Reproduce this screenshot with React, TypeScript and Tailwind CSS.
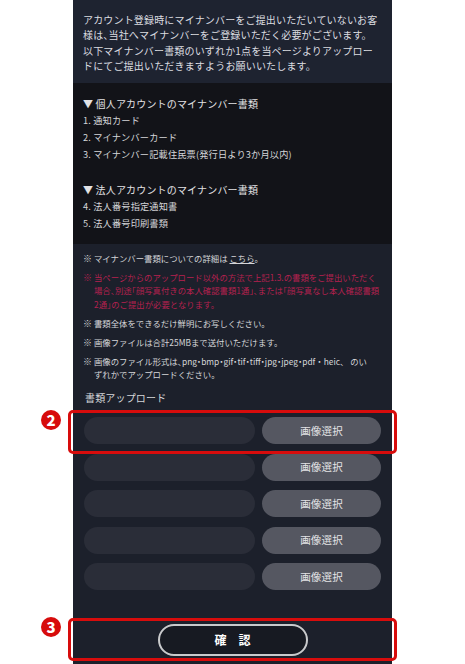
const font = { fontFamily: '"Noto Sans CJK JP", "Liberation Sans", sans-serif' };

function Half({ children }: { children: React.ReactNode }) {
  return <span className="[font-feature-settings:'halt']">{children}</span>;
}

function Note({ children, red }: { children: React.ReactNode; red?: boolean }) {
  return (
    <div className={"flex leading-[13.3px] " + (red ? "text-[#b5204f]" : "text-[#d5d6d9]")}>
      <span className="w-[11px] shrink-0 text-[9px]">※</span>
      <div className="whitespace-nowrap">{children}</div>
    </div>
  );
}

function UploadRow() {
  return (
    <div className="flex gap-[7px] h-[27px]">
      <div className="w-[171px] rounded-full bg-[#2a2d38]" />
      <div className="w-[119px] rounded-full bg-[#555761] flex items-center justify-center text-[10.5px] text-[#e4e4e6]">画像選択</div>
    </div>
  );
}

function Marker({ n, top, height }: { n: string; top: string; height: string }) {
  return (
    <>
      <div className={"absolute left-[41px] w-[20px] h-[20px] rounded-full bg-[#d70c0c] flex items-center justify-center text-white text-[15px] font-black " + (n === "2" ? "top-[410px]" : "top-[617px]")}>{n}</div>
      <div className={"absolute left-[68px] w-[329px] border-[3px] border-[#d70c0c] rounded-[5px] " + top + " " + height} />
    </>
  );
}

export default function App() {
  return (
    <div className="relative w-[465px] h-[664px] bg-white overflow-hidden" style={font}>
      <div className="ml-[73px] w-[319px] h-[664px] bg-[#1c202b] text-[10px] tracking-[0.17px]">
        <div className="h-[83px] pt-[12px] px-[10px] bg-[#1e2330] text-[#dcdde0] leading-[15.4px] whitespace-nowrap">
          <p>アカウント登録時にマイナンバーをご提出いただいていないお客</p>
          <p>様は<Half>、</Half>当社へマイナンバーをご登録いただく必要がございます。</p>
          <p>以下マイナンバー書類のいずれか1点を当ページよりアップロー</p>
          <p>ドにてご提出いただきますようお願いいたします。</p>
        </div>
        <div className="h-[161px] pt-[12px] px-[10px] bg-[#121318] text-[#d5d6d9] text-[9.2px] leading-[17px]">
          <p className="text-[10px] text-[#e2e2e4]">▼ 個人アカウントのマイナンバー書類</p>
          <p>1. 通知カード</p>
          <p>2. マイナンバーカード</p>
          <p>3. マイナンバー記載住民票(発行日より3か月以内)</p>
          <p className="text-[10px] text-[#e2e2e4] mt-[18px]">▼ 法人アカウントのマイナンバー書類</p>
          <p>4. 法人番号指定通知書</p>
          <p>5. 法人番号印刷書類</p>
        </div>
        <div className="pt-[8px] px-[10px] flex flex-col gap-[5.7px] text-[8.4px] tracking-[0px]">
          <Note><p>マイナンバー書類についての詳細は <span className="underline">こちら</span>。</p></Note>
          <Note red>
            <p>当ページからのアップロード以外の方法で上記1.3.の書類をご提出いただく</p>
            <p>場合<Half>、</Half>別途<Half>「</Half>顔写真付きの本人確認書類1通<Half>」、</Half>または<Half>「</Half>顔写真なし本人確認書類</p>
            <p>2通<Half>」</Half>のご提出が必要となります。</p>
          </Note>
          <Note><p>書類全体をできるだけ鮮明にお写しください。</p></Note>
          <Note><p>画像ファイルは合計25MBまで送付いただけます。</p></Note>
          <Note>
            <p>画像のファイル形式は<Half>、</Half>png<Half>・</Half>bmp<Half>・</Half>gif<Half>・</Half>tif<Half>・</Half>tiff<Half>・</Half>jpg<Half>・</Half>jpeg<Half>・</Half>pdf・heic、 のい</p>
            <p>ずれかでアップロードください。</p>
          </Note>
        </div>
        <p className="mt-[10px] ml-[12px] text-[10px] leading-[14px] text-[#d5d6d9]">書類アップロード</p>
        <div className="mt-[12px] ml-[11px] flex flex-col gap-[9.5px]">
          <UploadRow />
          <UploadRow />
          <UploadRow />
          <UploadRow />
          <UploadRow />
        </div>
        <div className="mt-[34px] flex justify-center">
          <div className="w-[150px] h-[32px] rounded-full border-2 border-[#c9cacc] bg-[#171a22] flex items-center justify-center text-white text-[12px] font-bold tracking-[12px] pl-[12px]">確認</div>
        </div>
      </div>
      <Marker n="2" top="top-[410px]" height="h-[44px]" />
      <Marker n="3" top="top-[618px]" height="h-[43px]" />
    </div>
  );
}
